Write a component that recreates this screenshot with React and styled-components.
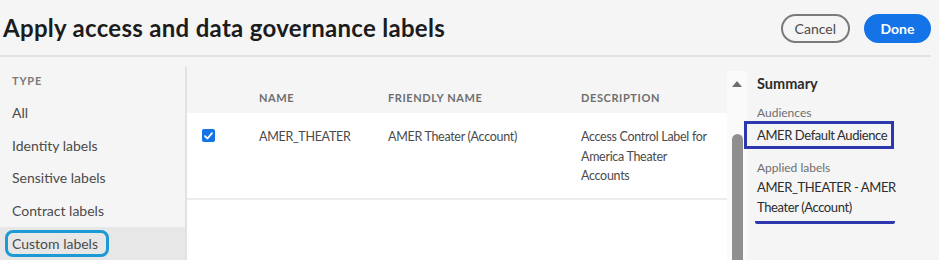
import React from 'react';
import styled, { createGlobalStyle } from 'styled-components';

const GlobalStyle = createGlobalStyle`
  body {
    margin: 0;
    background: #f5f5f5;
    font-family: Lato, "Open Sans", sans-serif;
    overflow: hidden;
  }
`

const Page = styled.div`
  width: 939px;
  height: 260px;
  display: flex;
  flex-direction: column;
  background: #f5f5f5;
`

const Header = styled.div`
  width: 931px;
  height: 57px;
  display: flex;
  align-items: center;
  justify-content: space-between;
  border-bottom: 2px solid #e2e2e2;
  box-sizing: border-box;
  padding-left: 3px;
`

const Title = styled.h1`
  margin: 0;
  font-size: 24px;
  font-weight: 700;
  color: #1c1c1c;
  letter-spacing: 0.3px;
`

const Actions = styled.div`
  display: flex;
  gap: 14px;
  margin-top: 1px;
`

const Button = styled.button`
  height: 29px;
  min-width: 67px;
  border-radius: 15px;
  font-family: inherit;
  font-size: 14px;
  font-weight: ${p => p.$primary ? 700 : 400};
  color: ${p => p.$primary ? '#fff' : '#4b4b4b'};
  background: ${p => p.$primary ? '#1473e6' : 'transparent'};
  border: 2px solid ${p => p.$primary ? '#1473e6' : '#7a7a7a'};
  padding: 0 12px;
`

const Body = styled.div`
  flex: 1;
  display: flex;
  padding-top: 10px;
  min-height: 0;
`

const Sidebar = styled.div`
  width: 185px;
  border-right: 2px solid #e2e2e2;
  display: flex;
  flex-direction: column;
`

const TypeLabel = styled.div`
  font-size: 11px;
  font-weight: 700;
  letter-spacing: 0.8px;
  color: #7a7a7a;
  padding: 7px 0 0 12px;
  height: 22px;
`

const NavItem = styled.div`
  height: 33px;
  display: flex;
  align-items: center;
  padding-left: ${p => p.$selected ? '5px' : '12px'};
  font-size: 14px;
  color: #4b4b4b;
  background: ${p => p.$selected ? '#e7e7e7' : 'transparent'};
`

const Circled = styled.span`
  display: inline-flex;
  align-items: center;
  height: 27px;
  padding: 0 8px 0 4px;
  border: 3px solid #1c9ad6;
  border-radius: 8px;
  box-sizing: border-box;
`

const TableArea = styled.div`
  width: 540px;
  display: flex;
  flex-direction: column;
`

const HeadRow = styled.div`
  height: 46px;
  display: grid;
  grid-template-columns: 72px 129px 193px 1fr;
  align-items: center;
  padding-top: 14px;
  box-sizing: border-box;
`

const HeadCell = styled.div`
  font-size: 11px;
  font-weight: 700;
  letter-spacing: 0.6px;
  color: #6e6e6e;
`

const Rows = styled.div`
  flex: 1;
  background: #fff;
  border-top-right-radius: 4px;
`

const Row = styled.div`
  display: grid;
  grid-template-columns: 72px 129px 193px 1fr;
  align-items: start;
  height: 87px;
  box-sizing: border-box;
  padding-top: 14px;
  border-bottom: 2px solid #ececec;
`

const Cell = styled.div`
  font-size: 12.5px;
  letter-spacing: -0.3px;
  line-height: 19.5px;
  color: #4b4b4b;
  max-width: ${p => p.$wrap ? '135px' : 'none'};
`

const CheckCell = styled.div`
  padding: 2px 0 0 15px;
`

const Checkbox = styled.span`
  display: flex;
  align-items: center;
  justify-content: center;
  width: 13px;
  height: 13px;
  border-radius: 2px;
  background: #1473e6;
`

const ScrollTrack = styled.div`
  width: 20px;
  margin-top: 4px;
  background: #fafafa;
  display: flex;
  flex-direction: column;
  align-items: center;
`

const ArrowUp = styled.div`
  width: 0;
  height: 0;
  margin-top: 10px;
  border-left: 5px solid transparent;
  border-right: 5px solid transparent;
  border-bottom: 6px solid #6e6e6e;
`

const Thumb = styled.div`
  width: 11px;
  flex: 1;
  margin-top: 47px;
  border-radius: 6px 6px 0 0;
  background: #8f8f8f;
`

const Summary = styled.div`
  flex: 1;
  padding-left: 10px;
  display: flex;
  flex-direction: column;
`

const SummaryTitle = styled.div`
  font-size: 14.5px;
  font-weight: 700;
  color: #2c2c2c;
  margin-top: 8px;
`

const SubLabel = styled.div`
  font-size: 12px;
  color: #6e6e6e;
  margin-top: ${p => p.$gap || '0'};
`

const Boxed = styled.div`
  align-self: flex-start;
  margin-left: -13px;
  margin-top: 1px;
  height: 28px;
  display: flex;
  align-items: center;
  padding: 0 4px 0 10px;
  border: 3px solid #2d37ae;
  box-sizing: border-box;
  font-size: 13px;
  letter-spacing: -0.4px;
  color: #2c2c2c;
`

const Applied = styled.div`
  width: 138px;
  margin-left: -2px;
  margin-top: 2px;
  padding: 0 0 4px 2px;
  border-bottom: 3px solid #2d37ae;
  border-radius: 0 0 2px 2px;
`

const AppliedText = styled.div`
  width: 155px;
  font-size: 13px;
  letter-spacing: -0.4px;
  line-height: 20px;
  color: #2c2c2c;
`

const types = ['All', 'Identity labels', 'Sensitive labels', 'Contract labels'];

function App(){
  return(
    <Page>
      <GlobalStyle />
      <Header>
        <Title>Apply access and data governance labels</Title>
        <Actions>
          <Button>Cancel</Button>
          <Button $primary>Done</Button>
        </Actions>
      </Header>
      <Body>
        <Sidebar>
          <TypeLabel>TYPE</TypeLabel>
          {types.map(t => <NavItem key={t}>{t}</NavItem>)}
          <NavItem $selected><Circled>Custom labels</Circled></NavItem>
        </Sidebar>
        <TableArea>
          <HeadRow>
            <div />
            <HeadCell>NAME</HeadCell>
            <HeadCell>FRIENDLY NAME</HeadCell>
            <HeadCell>DESCRIPTION</HeadCell>
          </HeadRow>
          <Rows>
            <Row>
              <CheckCell>
                <Checkbox>
                  <svg width="9" height="8" viewBox="0 0 9 8">
                    <path d="M1 4.2 L3.5 6.5 L8 1.2" fill="none" stroke="#fff" strokeWidth="1.8" strokeLinecap="round" strokeLinejoin="round" />
                  </svg>
                </Checkbox>
              </CheckCell>
              <Cell>AMER_THEATER</Cell>
              <Cell>AMER Theater (Account)</Cell>
              <Cell $wrap>Access Control Label for America Theater Accounts</Cell>
            </Row>
          </Rows>
        </TableArea>
        <ScrollTrack>
          <ArrowUp />
          <Thumb />
        </ScrollTrack>
        <Summary>
          <SummaryTitle>Summary</SummaryTitle>
          <SubLabel $gap="13px">Audiences</SubLabel>
          <Boxed>AMER Default Audience</Boxed>
          <SubLabel $gap="11px">Applied labels</SubLabel>
          <Applied>
            <AppliedText>AMER_THEATER - AMER Theater (Account)</AppliedText>
          </Applied>
        </Summary>
      </Body>
    </Page>
  )
}

export default App;
